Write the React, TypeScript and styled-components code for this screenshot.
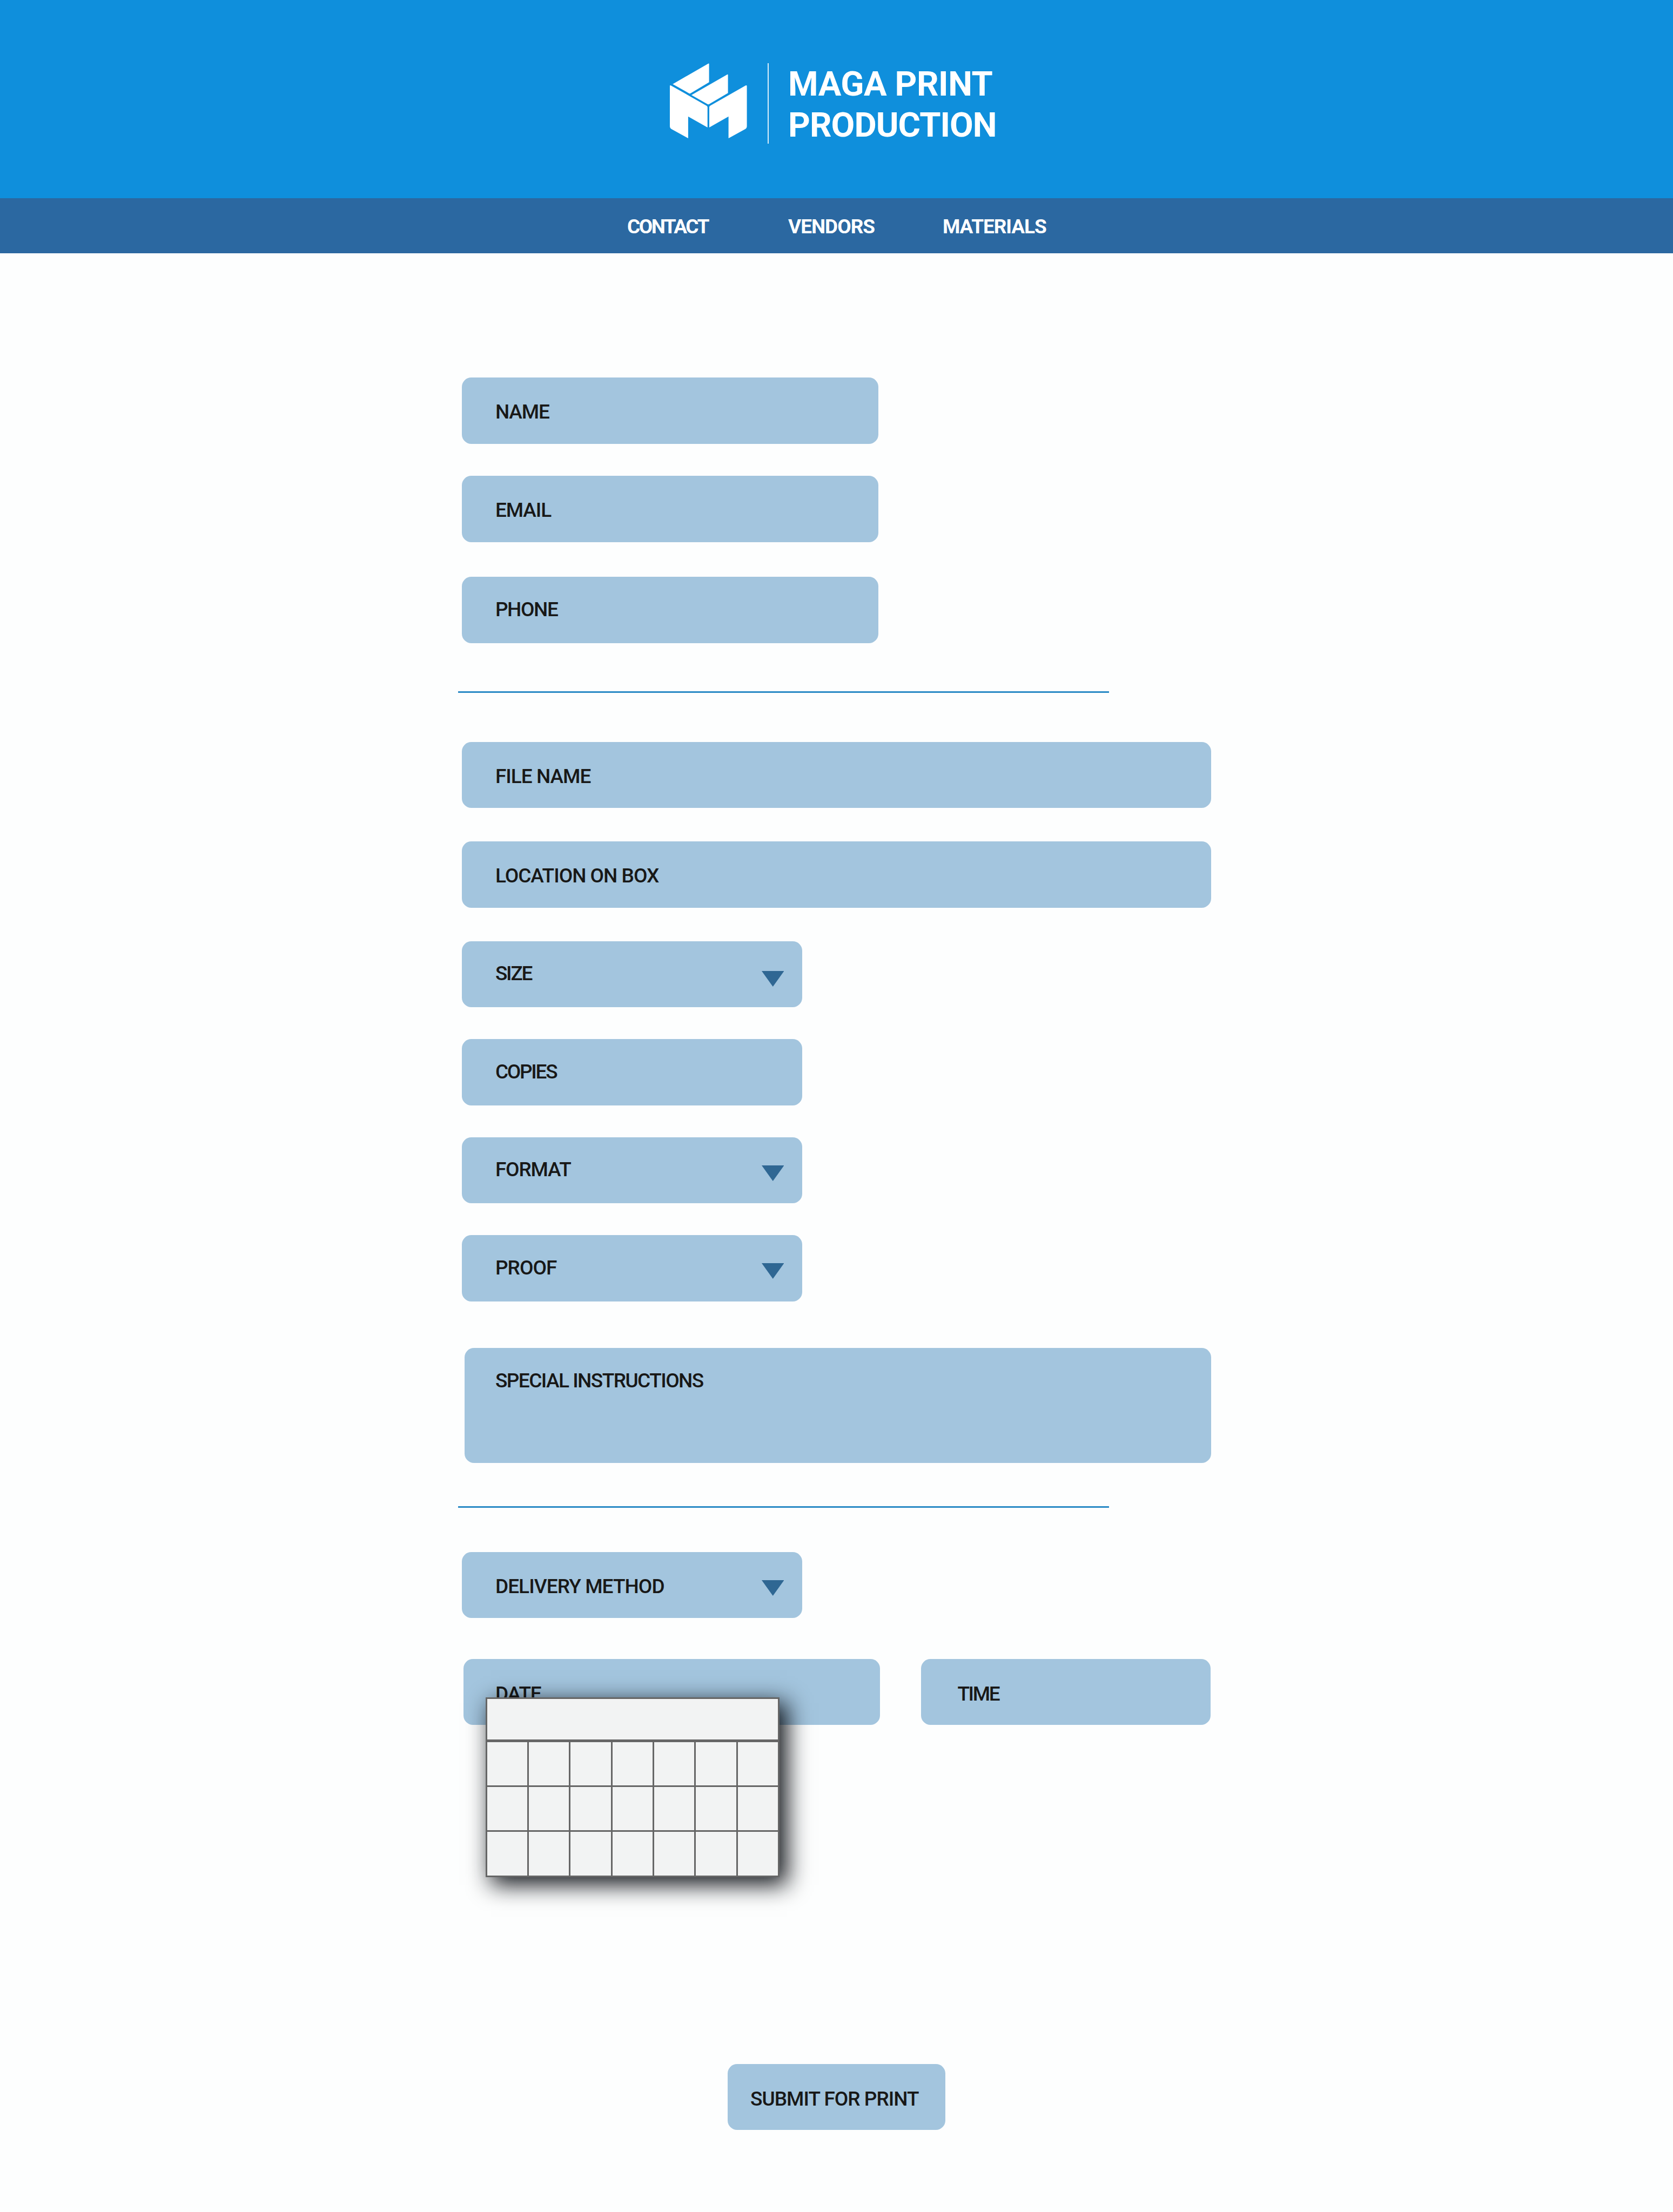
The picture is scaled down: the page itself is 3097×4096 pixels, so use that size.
import React from "react";
import styled, { createGlobalStyle } from "styled-components";

const GlobalStyle = createGlobalStyle`
  * { box-sizing: border-box; }
  html, body { margin: 0; padding: 0; background: #fdfefe; }
  body { font-family: Roboto, "Liberation Sans", sans-serif; }
`;

const Page = styled.div`
  display: flex;
  flex-direction: column;
  width: 3097px;
  height: 4096px;
  background: #fdfefe;
  overflow: hidden;
`;

const Header = styled.header`
  display: flex;
  align-items: flex-start;
  flex: none;
  height: 367px;
  padding: 117px 0 0 1240px;
  background: #0f8fdc;
`;

const Logo = styled.svg`
  flex: none;
  width: 143px;
  height: 140px;
  fill: #fff;
`;

const BrandRule = styled.div`
  width: 2px;
  height: 149px;
  margin: 0 36px 0 38px;
  background: #d9eefb;
`;

const Title = styled.h1`
  display: flex;
  flex-direction: column;
  margin: 0;
  padding-top: 1px;
  color: #fff;
  font-size: 63.5px;
  font-weight: 700;
  line-height: 76px;
`;

const TitleLine = styled.span<{ $tracking: number }>`
  letter-spacing: ${(p) => p.$tracking}px;
  white-space: nowrap;
`;

const Nav = styled.nav`
  display: grid;
  grid-template-columns: 298px 286px auto;
  justify-content: start;
  flex: none;
  height: 102px;
  padding: 40px 0 0 1161px;
  background: #2b68a1;
`;

const NavLink = styled.a<{ $tracking: number }>`
  color: #fff;
  font-size: 37px;
  font-weight: 700;
  line-height: 26px;
  letter-spacing: ${(p) => p.$tracking}px;
  white-space: nowrap;
`;

const Form = styled.form`
  display: flex;
  flex-direction: column;
  align-items: flex-start;
  padding: 230px 0 0 848px;
`;

const Group = styled.section<{ $gap: number; $top?: number }>`
  display: flex;
  flex-direction: column;
  align-items: flex-start;
  gap: ${(p) => p.$gap}px;
  margin-top: ${(p) => p.$top ?? 0}px;
  padding-left: 7.4px;
`;

const Divider = styled.hr<{ $top: number }>`
  width: 1205.4px;
  height: 3px;
  margin: ${(p) => p.$top}px 0 0;
  border: 0;
  background: #2a8ac5;
`;

const Field = styled.div<{ $width: number; $inset: number; $height?: number; $indent?: number }>`
  position: relative;
  display: flex;
  align-items: flex-start;
  justify-content: space-between;
  flex: none;
  width: ${(p) => p.$width}px;
  height: ${(p) => p.$height ?? 122.5}px;
  padding: ${(p) => p.$inset}px 33.5px 0 ${(p) => p.$indent ?? 61.5}px;
  border-radius: 17.5px;
  background: #a3c5de;
`;

const PhoneSlot = styled.div`
  padding-top: 5px;
`;

const Notes = styled.div`
  padding: 86px 0 0 4.5px;
`;

const Label = styled.span<{ $tracking: number }>`
  color: #181817;
  font-size: 37px;
  font-weight: 500;
  line-height: 26px;
  letter-spacing: ${(p) => p.$tracking}px;
  white-space: nowrap;
`;

const Caret = styled.svg<{ $drop: number }>`
  flex: none;
  width: 41.5px;
  height: 29px;
  margin-top: ${(p) => p.$drop}px;
  fill: #2f6793;
`;

const Schedule = styled.div`
  display: flex;
  gap: 76px;
  padding: 75.5px 0 0 2.5px;
`;

const Calendar = styled.div`
  position: absolute;
  top: 71px;
  left: 41px;
  display: flex;
  flex-direction: column;
  gap: 5px;
  width: 544px;
  height: 333px;
  padding: 3px;
  background: #666;
  box-shadow: 12px 12px 40px 2px rgba(6, 10, 15, 0.95);
`;

const CalendarHeader = styled.div`
  flex: none;
  height: 75px;
  background: #f2f3f3;
`;

const CalendarGrid = styled.div`
  display: grid;
  flex: 1;
  grid-template-columns: repeat(7, 1fr);
  grid-template-rows: repeat(3, 1fr);
  gap: 3px;
`;

const Day = styled.div`
  background: #f2f3f3;
`;

const Submit = styled.button`
  display: flex;
  align-items: flex-start;
  width: 402.5px;
  height: 122px;
  margin: 627.5px 0 0 499px;
  padding: 52px 0 0 42px;
  border: 0;
  border-radius: 17.5px;
  background: #a3c5de;
  font-family: inherit;
`;

function BrandMark() {
  return (
    <Logo viewBox="0 0 143 140" aria-hidden="true">
      <path d="M71.2 0.8Q72.6 0 72.6 1.6V35.3L38 56Q36.9 56.7 35.8 56L5.3 38.7Z" />
      <path d="M106.2 21Q107.6 20.3 107.6 21.8V55.2L72.4 76Q71.2 76.7 70 76L40 59Z" />
      <path d="M0 42.5Q0 40.4 2.2 41.4L67.8 78.7Q69.7 79.8 69.7 81.5V119L33.9 98.7V139.1L3 122Q0 120.2 0 116.6Z" />
      <path d="M73 81.5Q73 79.8 74.7 78.8L140.4 41.2Q142.6 40.2 142.6 42.4V116.6Q142.6 120.2 139.6 122L108.6 139.1V98.7L73 119Z" />
    </Logo>
  );
}

function Arrow({ drop }: { drop: number }) {
  return (
    <Caret $drop={drop} viewBox="0 0 41.5 29" preserveAspectRatio="none">
      <path d="M0 0H41.5L20.75 29Z" />
    </Caret>
  );
}

const CONTACT_WIDTH = 771;
const FULL_WIDTH = 1387;
const SELECT_WIDTH = 629.5;

export default function App() {
  return (
    <Page>
      <GlobalStyle />
      <Header>
        <BrandMark />
        <BrandRule />
        <Title>
          <TitleLine $tracking={-0.5}>MAGA PRINT</TitleLine>
          <TitleLine $tracking={-1}>PRODUCTION</TitleLine>
        </Title>
      </Header>
      <Nav>
        <NavLink $tracking={-2.5}>CONTACT</NavLink>
        <NavLink $tracking={-1}>VENDORS</NavLink>
        <NavLink $tracking={-1.1}>MATERIALS</NavLink>
      </Nav>
      <Form>
        <Group $gap={59.5}>
          <Field $width={CONTACT_WIDTH} $inset={51}>
            <Label $tracking={-1.13}>NAME</Label>
          </Field>
          <Field $width={CONTACT_WIDTH} $inset={51}>
            <Label $tracking={-1.07}>EMAIL</Label>
          </Field>
          <PhoneSlot>
            <Field $width={CONTACT_WIDTH} $inset={48}>
              <Label $tracking={-1.4}>PHONE</Label>
            </Field>
          </PhoneSlot>
        </Group>

        <Divider $top={89.5} />

        <Group $gap={62} $top={90.5}>
          <Field $width={FULL_WIDTH} $inset={51}>
            <Label $tracking={-0.98}>FILE NAME</Label>
          </Field>
          <Field $width={FULL_WIDTH} $inset={51}>
            <Label $tracking={-1}>LOCATION ON BOX</Label>
          </Field>
        </Group>
        <Group $gap={59} $top={62}>
          <Field $width={SELECT_WIDTH} $inset={47.5}>
            <Label $tracking={-2.17}>SIZE</Label>
            <Arrow drop={8} />
          </Field>
          <Field $width={SELECT_WIDTH} $inset={47.5}>
            <Label $tracking={-2.26}>COPIES</Label>
          </Field>
          <Field $width={SELECT_WIDTH} $inset={47.5}>
            <Label $tracking={-1.16}>FORMAT</Label>
            <Arrow drop={4.5} />
          </Field>
          <Field $width={SELECT_WIDTH} $inset={47.5}>
            <Label $tracking={-0.95}>PROOF</Label>
            <Arrow drop={4.5} />
          </Field>
        </Group>
        <Group $gap={0}>
          <Notes>
            <Field $width={1382.5} $height={213} $inset={48.5} $indent={57}>
              <Label $tracking={-1.54}>SPECIAL INSTRUCTIONS</Label>
            </Field>
          </Notes>
        </Group>

        <Divider $top={80} />

        <Group $gap={0} $top={82}>
          <Field $width={SELECT_WIDTH} $inset={51}>
            <Label $tracking={-0.92}>DELIVERY METHOD</Label>
            <Arrow drop={1.5} />
          </Field>
          <Schedule>
            <Field $width={771} $inset={52.5} $indent={59}>
              <Label $tracking={-1.27}>DATE</Label>
              <Calendar>
                <CalendarHeader />
                <CalendarGrid>
                  {Array.from({ length: 21 }, (_, day) => (
                    <Day key={day} />
                  ))}
                </CalendarGrid>
              </Calendar>
            </Field>
            <Field $width={536} $inset={52.5} $indent={67.5}>
              <Label $tracking={-2.33}>TIME</Label>
            </Field>
          </Schedule>
        </Group>

        <Submit type="button">
          <Label $tracking={-0.97}>SUBMIT FOR PRINT</Label>
        </Submit>
      </Form>
    </Page>
  );
}
